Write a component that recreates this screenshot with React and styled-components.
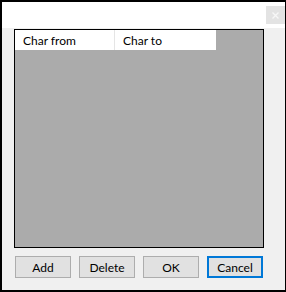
import styled, { createGlobalStyle } from 'styled-components';

const GlobalStyle = createGlobalStyle`
    html, body {
        margin: 0;
        padding: 0;
        background: #000;
    }
    * {
        box-sizing: border-box;
    }
`;

const Window = styled.div`
    width: 286px;
    height: 292px;
    background: #000;
    padding: 2px 1px 2px 2px;
    display: flex;
    flex-direction: column;
    font-family: Lato, "Liberation Sans", Arial, sans-serif;
    font-size: 12px;
    color: #000;
`;

const TitleBar = styled.div`
    height: 26px;
    background: #fff;
    display: flex;
    justify-content: flex-end;
    align-items: flex-start;
    padding-top: 4px;
`;

const CloseButton = styled.div`
    width: 19px;
    height: 18px;
    background: #e3e3e3;
    display: flex;
    align-items: center;
    justify-content: center;
`;

const Body = styled.div`
    flex: 1;
    background: #f0f0f0;
    display: flex;
    flex-direction: column;
    padding: 1px 0 0 12px;
`;

const Grid = styled.div`
    width: 250px;
    height: 219px;
    border: 1px solid #000;
    background: #ababab;
`;

const HeaderRow = styled.div`
    display: flex;
    width: 201px;
    height: 20px;
    background: #fff;
`;

const HeaderCell = styled.div`
    width: ${(p) => p.w}px;
    padding-left: 8px;
    display: flex;
    align-items: center;
    border-right: ${(p) => (p.sep ? '1px solid #e5e5e5' : 'none')};
`;

const ButtonRow = styled.div`
    display: flex;
    gap: 8px;
    margin-top: 8px;
    padding-left: 1px;
`;

const Button = styled.button`
    width: 56px;
    height: 22px;
    padding: 0;
    font-family: inherit;
    font-size: 12px;
    color: #000;
    background: #e1e1e1;
    border: ${(p) => (p.primary ? '2px solid #0078d7' : '1px solid #adadad')};
`;

const App = () => {
    return (
        <>
            <GlobalStyle />
            <Window>
                <TitleBar>
                    <CloseButton>
                        <svg width="7" height="7" viewBox="0 0 7 7">
                            <path d="M0.5 0.5L6.5 6.5M6.5 0.5L0.5 6.5" stroke="#f7f7f7" strokeWidth="1.4" />
                        </svg>
                    </CloseButton>
                </TitleBar>
                <Body>
                    <Grid>
                        <HeaderRow>
                            <HeaderCell w={100} sep>Char from</HeaderCell>
                            <HeaderCell w={101}>Char to</HeaderCell>
                        </HeaderRow>
                    </Grid>
                    <ButtonRow>
                        <Button>Add</Button>
                        <Button>Delete</Button>
                        <Button>OK</Button>
                        <Button primary>Cancel</Button>
                    </ButtonRow>
                </Body>
            </Window>
        </>
    );
};

export default App;
